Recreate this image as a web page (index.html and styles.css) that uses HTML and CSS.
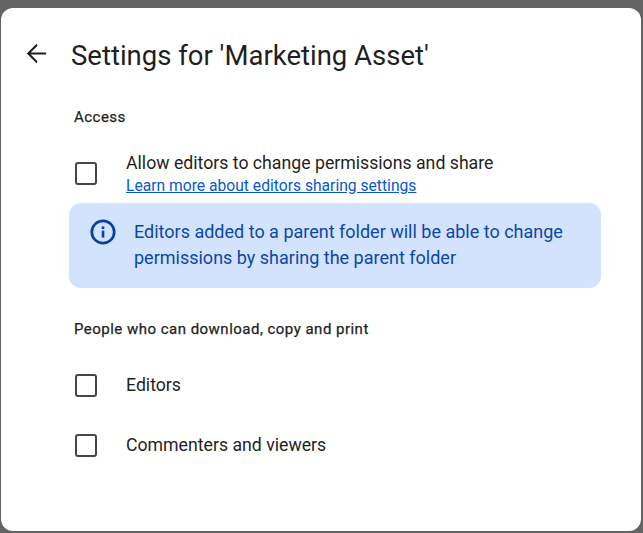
FILE: index.html
```html
<!DOCTYPE html>
<html lang="en">
<head>
<meta charset="utf-8">
<title>Settings</title>
<link rel="stylesheet" href="styles.css">
</head>
<body>
<main class="dialog">
  <header class="head">
    <svg class="back" width="29" height="29" viewBox="0 0 24 24"><path d="M20 11.2H7.2l5.6-5.6L12 4l-8 8 8 8 .8-1.6-5.6-5.6H20z"/></svg>
    <h1 class="title">Settings for 'Marketing Asset'</h1>
  </header>
  <section class="content">
    <h2 class="label label-access">Access</h2>
    <div class="row row-first">
      <span class="box box-first"></span>
      <div class="stack">
        <div class="text">Allow editors to change permissions and share</div>
        <a class="link" href="#">Learn more about editors sharing settings</a>
      </div>
    </div>
    <div class="info">
      <svg class="info-icon" width="28" height="28" viewBox="0 0 28 28"><circle cx="14" cy="14" r="11.2" fill="none" stroke="#0842a0" stroke-width="2.7"/><rect x="12.7" y="12.6" width="2.6" height="7" fill="#0842a0"/><rect x="12.7" y="8.4" width="2.6" height="2.6" fill="#0842a0"/></svg>
      <p class="info-text">Editors added to a parent folder will be able to change permissions by sharing the parent folder</p>
    </div>
    <h2 class="label label-people">People who can download, copy and print</h2>
    <div class="row row-editors">
      <span class="box"></span>
      <div class="text">Editors</div>
    </div>
    <div class="row row-viewers">
      <span class="box"></span>
      <div class="text">Commenters and viewers</div>
    </div>
  </section>
</main>
</body>
</html>
```

FILE: styles.css
```css
* { box-sizing: border-box; }
html, body { height: 100%; }
body {
  margin: 0;
  background: #636363;
  padding: 8px 2px 2px 1px;
  font-family: "Roboto", "Liberation Sans", sans-serif;
  color: #1f1f1f;
  overflow: hidden;
}
.dialog {
  height: 523px;
  background: #fff;
  border-radius: 12px;
  padding: 28px 40px 0 21px;
}
.head {
  display: flex;
  align-items: center;
  gap: 20px;
  height: 40px;
}
.back { fill: #1f1f1f; flex: none; margin-bottom: 6px; }
.title {
  margin: 0;
  font-size: 27.5px;
  font-weight: 400;
  line-height: 40px;
}
.content { padding-left: 47px; }
.label {
  margin: 0;
  font-size: 15px;
  font-weight: 400;
  line-height: 20px;
  letter-spacing: .48px;
  -webkit-text-stroke: .25px #1f1f1f;
  padding-left: 5px;
}
.label-access { margin-top: 31px; }
.label-people { margin-top: 31px; }
.row {
  display: flex;
  align-items: center;
  gap: 29px;
  padding-left: 6px;
}
.row-first { margin-top: 24px; }
.row-editors { margin-top: 34px; }
.row-viewers { margin-top: 36px; }
.box {
  flex: none;
  width: 22px;
  height: 23px;
  border: 2px solid #444746;
  border-radius: 3px;
}
.box-first { margin-bottom: 2px; }
.stack { display: flex; flex-direction: column; }
.text { font-size: 17.7px; line-height: 24px; }
.link {
  font-size: 15.65px;
  line-height: 22px;
  color: #0b57d0;
}
.info {
  display: flex;
  gap: 17px;
  margin-top: 6px;
  width: 532px;
  height: 85px;
  background: #d3e3fd;
  border-radius: 12px;
  padding: 16px 20px;
  color: #0b47a8;
}
.info-icon { flex: none; margin-top: -1px; }
.info-text {
  margin: 0;
  font-size: 18px;
  line-height: 26px;
}
```
